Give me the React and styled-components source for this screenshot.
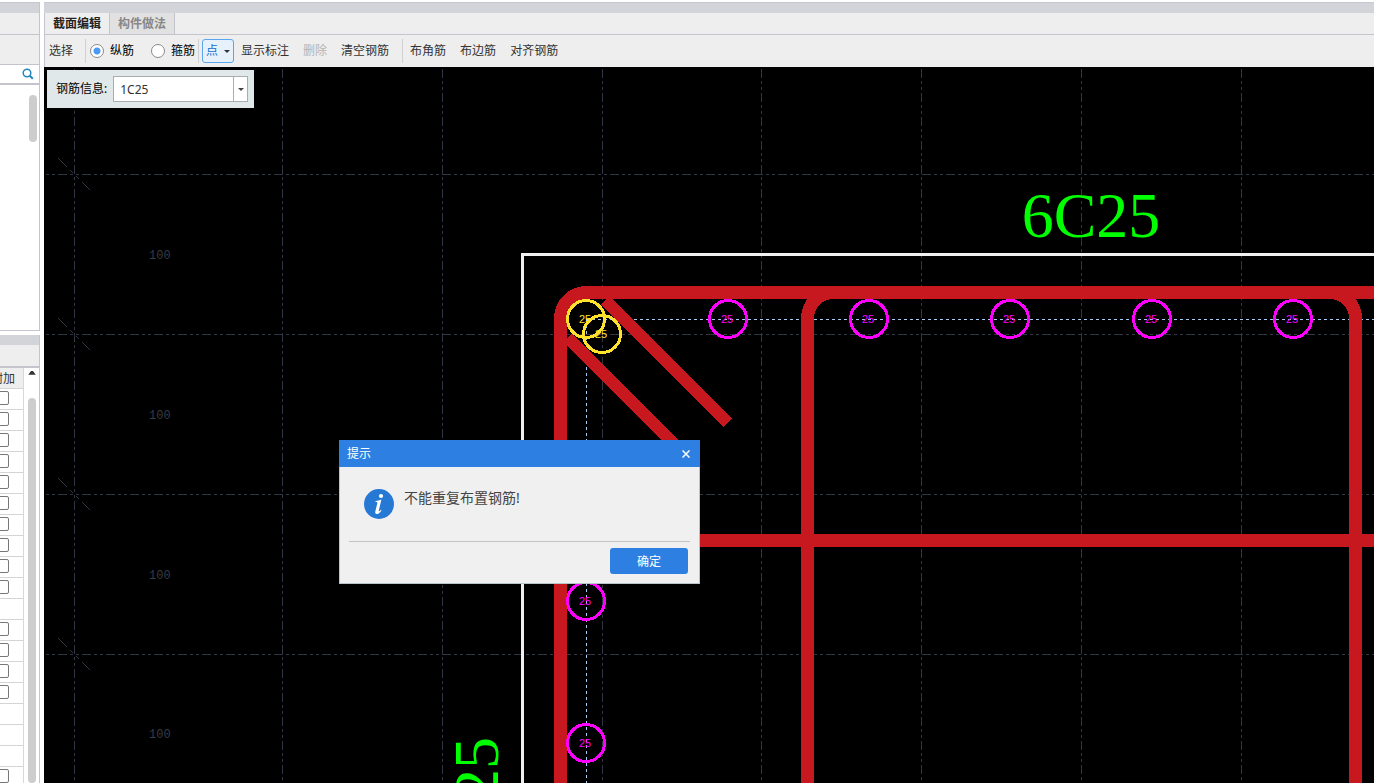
import { useState } from "react";
import styled, { createGlobalStyle } from "styled-components";

const GlobalStyle = createGlobalStyle`
  * {
    box-sizing: border-box;
  }

  body {
    margin: 0;
    background: #fff;
    color: #222;
    font-family: "Noto Sans", "Noto Sans CJK SC", sans-serif;
    font-size: 12px;
    line-height: 18px;
  }

  button,
  input,
  select {
    margin: 0;
    font: inherit;
  }
`;

const Page = styled.div`
  display: flex;
  gap: 4px;
  height: 100vh;
  padding-top: 2px;
  overflow: hidden;
`;

const Sidebar = styled.aside`
  display: flex;
  flex-direction: column;
  gap: 4px;
  width: 40px;
  flex: none;
`;

const Panel = styled.section`
  display: flex;
  flex-direction: column;
  flex: ${({ $grow }) => ($grow ? "1" : "none")};
  min-height: 0;
  border-right: 1px solid #c4c4cc;
  border-bottom: ${({ $grow }) => ($grow ? "0" : "1px solid #c4c4cc")};
`;

const PanelBar = styled.div`
  height: ${({ $height }) => $height}px;
  flex: none;
  background: ${({ $title }) => ($title ? "#d3d4da" : "#eeeeee")};
  border-top: ${({ $top }) => ($top ? "1px solid #c8c8d0" : "0")};
  border-bottom: ${({ $line }) => $line || 0}px solid #c4c4cc;
`;

const SearchBar = styled.div`
  display: flex;
  justify-content: flex-end;
  align-items: center;
  height: 20px;
  padding-right: 5px;
  border-bottom: 2px solid #c4c4cc;
`;

const IconButton = styled.button`
  display: flex;
  align-items: center;
  justify-content: center;
  padding: 0;
  border: 0;
  background: none;
`;

const TreeArea = styled.div`
  display: flex;
  justify-content: flex-end;
  height: 245px;
  padding: 10px 2px;
`;

const Thumb = styled.div`
  width: 8px;
  height: ${({ $height }) => $height};
  border-radius: 4px;
  background: #cdcdcd;
`;

const TableArea = styled.div`
  display: flex;
  flex: 1;
  min-height: 0;
  overflow: hidden;
`;

const TableClip = styled.div`
  display: flex;
  justify-content: flex-end;
  width: 24px;
  overflow: hidden;
`;

const Table = styled.table`
  flex: none;
  align-self: flex-start;
  width: 40px;
  border-collapse: separate;
  border-spacing: 0;
  border-right: 1px solid #d8d8d8;
`;

const HeadCell = styled.th`
  height: 21px;
  padding: 1px 8px 0 0;
  background: #eeeeee;
  border-bottom: 1px solid #d4d4d4;
  color: #333;
  font-weight: 400;
  text-align: right;
  white-space: nowrap;
`;

const Cell = styled.td`
  height: 21px;
  padding: 0 14px 2px 0;
  border-bottom: 1px solid #d4d4d4;
  text-align: right;
`;

const CheckBox = styled.input`
  display: block;
  width: 14px;
  height: 14px;
  margin-left: auto;
  appearance: none;
  border: 1px solid #777;
  border-radius: 2px;
  background: #fff;
`;

const TableScroll = styled.div`
  display: flex;
  flex-direction: column;
  gap: 23px;
  flex: 1;
  padding: 3px 3px 0 4px;
`;

const Main = styled.main`
  display: flex;
  flex-direction: column;
  flex: 1;
  min-width: 0;
`;

const TabList = styled.div`
  display: flex;
  height: 22px;
  flex: none;
  border-left: 1px solid #c4c4cc;
  border-bottom: 1px solid #c4c4cc;
  background: #eeeeee;
`;

const Tab = styled.button`
  padding: 0 8px;
  border: 0;
  border-right: 1px solid #c4c4cc;
  background: ${({ $active }) => ($active ? "#eeeeee" : "#e1e1e1")};
  color: ${({ $active }) => ($active ? "#222" : "#888")};
  font-weight: 700;
`;

const Toolbar = styled.div`
  display: flex;
  align-items: center;
  height: 32px;
  flex: none;
  border-left: 1px solid #c4c4cc;
  background: #eeeeee;
  white-space: nowrap;
`;

const ToolButton = styled.button`
  padding: 0 ${({ $tight }) => ($tight ? 4 : 7)}px;
  border: 0;
  background: none;
  color: #333;

  &:disabled {
    color: #b4b4b4;
  }
`;

const Separator = styled.span`
  width: 1px;
  height: 24px;
  margin: 0 ${({ $right }) => $right || 0}px 0 ${({ $left }) => $left || 0}px;
  background: #d0d0d0;
`;

const RadioGroup = styled.div`
  display: flex;
  gap: 17px;
`;

const RadioLabel = styled.label`
  display: flex;
  align-items: center;
  gap: 6px;
  color: #000;
`;

const Radio = styled.input`
  width: 14px;
  height: 14px;
  appearance: none;
  border: 1px solid #8a8a8a;
  border-radius: 50%;
  background: #fff;

  &:checked {
    background: radial-gradient(circle, #4a9af5 3px, #fff 4px);
  }
`;

const DropButton = styled.button`
  display: flex;
  align-items: center;
  justify-content: space-between;
  width: 32px;
  height: 24px;
  padding: 0 3px;
  border: 1px solid #5aa5f0;
  border-radius: 3px;
  background: #e6f1fc;
  color: #0f6fd0;
`;

const Canvas = styled.div`
  position: relative;
  flex: 1;
  min-height: 0;
  background: #000;
  overflow: hidden;
`;

const Drawing = styled.svg`
  display: block;
  width: 100%;
  height: 100%;
`;

const BarInfo = styled.div`
  position: absolute;
  top: 3px;
  left: 3px;
  display: flex;
  align-items: center;
  gap: 6px;
  padding: 6px 6px 6px 9px;
  background: #e0e8ea;
  color: #000;
`;

const Combo = styled.div`
  display: flex;
  position: relative;
  width: 135px;
`;

const Select = styled.select`
  width: 100%;
  height: 26px;
  padding: 2px 20px 0 6px;
  appearance: none;
  border: 1px solid #a8adb0;
  border-radius: 0;
  background: #fff;
  color: #333;
`;

const ComboArrow = styled.span`
  position: absolute;
  top: 1px;
  right: 1px;
  bottom: 1px;
  display: flex;
  align-items: center;
  justify-content: center;
  width: 14px;
  border-left: 1px solid #a8adb0;
  pointer-events: none;
`;

const Dialog = styled.div`
  position: absolute;
  top: 440px;
  left: 339px;
  width: 361px;
  background: #f0f0f0;
`;

const DialogTitle = styled.div`
  display: flex;
  align-items: center;
  justify-content: space-between;
  height: 27px;
  padding: 0 10px 0 8px;
  background: #2d80e1;
  color: #fff;
`;

const DialogBody = styled.div`
  border: 1px solid #b8c4cc;
  border-top: 0;
`;

const Message = styled.div`
  display: flex;
  gap: 10px;
  min-height: 74px;
  padding: 22px 24px 0;
  color: #444;
  font-size: 14px;
`;

const DialogFooter = styled.div`
  display: flex;
  justify-content: flex-end;
  margin: 0 9px;
  padding: 6px 2px 9px;
  border-top: 1px solid #c4c4c4;
`;

const OkButton = styled.button`
  width: 78px;
  height: 26px;
  padding: 2px 0 0;
  border: 0;
  border-radius: 3px;
  background: #2d80e1;
  color: #fff;
`;

const rows = Array.from({ length: 19 }, (_, i) => ![10, 15, 16, 17].includes(i));

const gridX = [74, 282, 442, 602, 761, 921, 1081, 1241];
const gridY = [174, 334, 494, 654];
const spacingY = [254, 414, 574, 733];

const rebars = [
  { x: 728, y: 319 },
  { x: 869, y: 319 },
  { x: 1010, y: 319 },
  { x: 1152, y: 319 },
  { x: 1293, y: 319 },
  { x: 586, y: 601 },
  { x: 586, y: 743 },
  { x: 586, y: 319, selected: true },
  { x: 602, y: 334, selected: true },
];

const Rebar = ({ x, y, selected }) => {
  const color = selected ? "#ffe22c" : "#ff00ff";

  return (
    <g>
      <circle cx={x} cy={y} r="18.5" fill="none" stroke={color} strokeWidth="3" />
      <text
        x={x - 1}
        y={y + 4}
        fill={color}
        fontFamily="Liberation Sans, sans-serif"
        fontSize="11"
        textAnchor="middle"
      >
        25
      </text>
    </g>
  );
};

const Caret = ({ color }) => (
  <svg width="6" height="3" viewBox="0 0 6 3" aria-hidden="true">
    <path d="M0 0h6L3 3z" fill={color} />
  </svg>
);

const SectionDrawing = () => (
  <Drawing aria-label="截面">
    <g transform="translate(-44 -67)" shapeRendering="crispEdges">
      {/* axis grid */}
      <g stroke="#303644" strokeWidth="1" strokeDasharray="9 3 3 3 3 3">
        {gridX.map((x) => (
          <line key={x} x1={x + 0.5} x2={x + 0.5} y1="69" y2="3000" />
        ))}
        {gridY.map((y) => (
          <line
            key={y}
            x1="46"
            x2="4000"
            y1={y + 0.5}
            y2={y + 0.5}
            strokeDashoffset="12"
          />
        ))}
      </g>
      <g stroke="#303644" strokeWidth="1">
        {gridY.map((y) => (
          <path
            key={y}
            d={`M58 ${y - 16}l9 9M70 ${y - 4}l3 3M76 ${y + 2}l3 3M82 ${y + 8}l8 8`}
          />
        ))}
      </g>
      <g
        fill="#363c49"
        fontFamily="Liberation Mono, monospace"
        fontSize="12"
      >
        {spacingY.map((y) => (
          <text key={y} x="149" y={y + 5}>
            100
          </text>
        ))}
      </g>

      {/* concrete outline */}
      <path
        d="M522.5 3000V254.5H4000"
        fill="none"
        stroke="#f0f0f0"
        strokeWidth="3"
      />

      <path
        d="M586.5 319V3000M586 319.5H4000"
        fill="none"
        stroke="#a8ccf4"
        strokeWidth="1"
        strokeDasharray="3 3"
      />

      {/* stirrups */}
      <g fill="none" stroke="#c8181f" strokeWidth="13">
        <path d="M560.5 3000V318.5A26 26 0 0 1 586.5 292.5H4000" />
        <path d="M807.5 3000V318.5A26 26 0 0 1 833.5 292.5H1329.5A26 26 0 0 1 1355.5 318.5V3000" />
        <path d="M560 540.5H4000" />
        <path d="M605 300L728 423" strokeWidth="12" />
        <path d="M568 338L686 456" strokeWidth="12" />
      </g>
      <path d="M600 305l6-6M567 338l6-6" stroke="#000" strokeWidth="1" />

      {rebars.map((rebar) => (
        <Rebar key={`${rebar.x}-${rebar.y}`} {...rebar} />
      ))}

      <g fill="#00ff00" fontFamily="Liberation Serif, serif" fontSize="64">
        <text x="1091" y="237" textAnchor="middle">
          6C25
        </text>
        <text transform="translate(498 737) rotate(-90)" textAnchor="end">
          25
        </text>
      </g>
    </g>
  </Drawing>
);

const LeftSidebar = () => (
  <Sidebar>
    <Panel>
      <PanelBar $height={11} $title $top />
      <PanelBar $height={22} $line={1} />
      <PanelBar $height={30} $line={1} />
      <SearchBar>
        <IconButton aria-label="搜索">
          <svg width="12" height="12" viewBox="0 0 12 12" fill="none">
            <circle cx="5" cy="5" r="3.8" stroke="#2487bd" strokeWidth="1.5" />
            <path d="M7.8 7.8L10.8 10.8" stroke="#2487bd" strokeWidth="2" />
          </svg>
        </IconButton>
      </SearchBar>
      <TreeArea>
        <Thumb $height="47px" />
      </TreeArea>
    </Panel>
    <Panel $grow>
      <PanelBar $height={10} $title />
      <PanelBar $height={23} $line={2} />
      <TableArea>
        <TableClip>
          <Table>
            <thead>
              <tr>
                <HeadCell>附加</HeadCell>
              </tr>
            </thead>
            <tbody>
              {rows.map((hasCheck, i) => (
                <tr key={i}>
                  <Cell>
                    {hasCheck && <CheckBox type="checkbox" aria-label="附加" />}
                  </Cell>
                </tr>
              ))}
            </tbody>
          </Table>
        </TableClip>
        <TableScroll>
          <svg width="8" height="4" viewBox="0 0 8 4" aria-hidden="true">
            <path d="M0 4L3 0H5L8 4z" fill="#333" />
          </svg>
          <Thumb $height="100%" />
        </TableScroll>
      </TableArea>
    </Panel>
  </Sidebar>
);

const App = () => {
  const [barType, setBarType] = useState("纵筋");
  const [dialogOpen, setDialogOpen] = useState(true);

  const closeDialog = () => {
    setDialogOpen(false);
  };

  return (
    <>
      <GlobalStyle />
      <Page>
        <LeftSidebar />
        <Main>
          <PanelBar $height={11} $title $top />
          <TabList>
            <Tab $active>截面编辑</Tab>
            <Tab>构件做法</Tab>
          </TabList>
          <Toolbar>
            <ToolButton $tight>选择</ToolButton>
            <Separator $left={8} $right={4} />
            <RadioGroup>
              {["纵筋", "箍筋"].map((type) => (
                <RadioLabel key={type}>
                  <Radio
                    type="radio"
                    name="barType"
                    checked={barType === type}
                    onChange={() => setBarType(type)}
                  />
                  {type}
                </RadioLabel>
              ))}
            </RadioGroup>
            <Separator $left={3} $right={3} />
            <DropButton>
              点
              <Caret color="#333" />
            </DropButton>
            <ToolButton>显示标注</ToolButton>
            <ToolButton disabled>删除</ToolButton>
            <ToolButton>清空钢筋</ToolButton>
            <Separator $left={6} />
            <ToolButton>布角筋</ToolButton>
            <ToolButton>布边筋</ToolButton>
            <ToolButton>对齐钢筋</ToolButton>
          </Toolbar>
          <Canvas>
            <SectionDrawing />
            <BarInfo>
              <label htmlFor="barInfo">钢筋信息:</label>
              <Combo>
                <Select id="barInfo" defaultValue="1C25">
                  <option>1C25</option>
                </Select>
                <ComboArrow>
                  <Caret color="#444" />
                </ComboArrow>
              </Combo>
            </BarInfo>
          </Canvas>
        </Main>
      </Page>
      {dialogOpen && (
        <Dialog role="dialog" aria-labelledby="dialogTitle">
          <DialogTitle>
            <span id="dialogTitle">提示</span>
            <IconButton aria-label="关闭" onClick={closeDialog}>
              <svg width="8" height="8" viewBox="0 0 8 8">
                <path d="M.5 .5L7.5 7.5M7.5 .5L.5 7.5" stroke="#fff" strokeWidth="1.5" />
              </svg>
            </IconButton>
          </DialogTitle>
          <DialogBody>
            <Message>
              <svg width="30" height="30" viewBox="0 0 30 30" aria-hidden="true">
                <circle cx="15" cy="15" r="15" fill="#2579d4" />
                <circle cx="17" cy="7" r="2.1" fill="#fff" />
                <path
                  d="M11.6 12C13.6 11.7 15.4 11.2 17.4 10.4L14.8 21.6C14.6 22.8 15.2 22.8 16.8 20.8L17.5 21.4C15.8 24 14 25.2 12.6 25C11.2 24.8 11 23.6 11.4 22L13.4 14C13.6 13.2 13 12.9 11.5 13Z"
                  fill="#fff"
                />
              </svg>
              <span>不能重复布置钢筋!</span>
            </Message>
            <DialogFooter>
              <OkButton onClick={closeDialog}>确定</OkButton>
            </DialogFooter>
          </DialogBody>
        </Dialog>
      )}
    </>
  );
};

export default App;
